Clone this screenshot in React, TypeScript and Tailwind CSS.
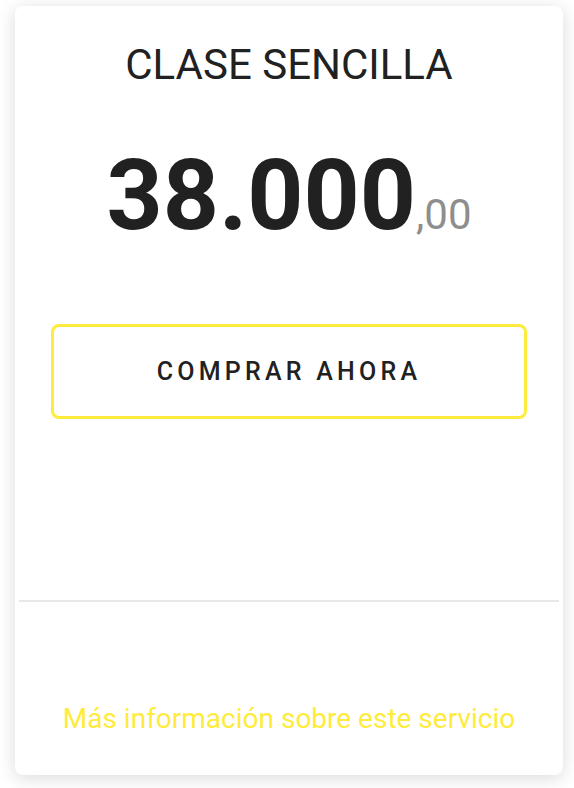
import React from 'react';

// Tarjeta de precio de una clase
export default function App() {
  return (
    <div className="min-h-[788px] bg-white pt-[6px] pl-[15px]" style={{ fontFamily: 'Roboto, "Noto Sans", sans-serif' }}>
      <div className="w-[548px] rounded-lg bg-white shadow-[0_3px_18px_rgba(0,0,0,0.15)] flex flex-col items-center pb-[41px]">
        <h2 className="mt-[35px] text-[42px] leading-[48px] font-normal text-[#212121]">CLASE SENCILLA</h2>

        <div className="mt-[57px] h-[100px] text-[98px] leading-[100px] font-bold text-[#212121] whitespace-nowrap">
          <span>38.000</span>
          <span className="text-[42px] leading-none font-normal text-[#8e8e8e]">,00</span>
        </div>

        <button className="mt-[78px] w-[476px] h-[95px] rounded-lg border-[3px] border-[#ffeb3b] bg-white text-[25px] font-medium tracking-[0.17em] text-[#212121] uppercase">
          Comprar ahora
        </button>

        <div className="mt-[181px] h-[2px] w-[540px] bg-[#e8e8e8]" />

        <a href="#" className="mt-[102px] text-[28px] leading-[30px] text-[#ffeb3b]">
          Más información sobre este servicio
        </a>
      </div>
    </div>
  );
}
